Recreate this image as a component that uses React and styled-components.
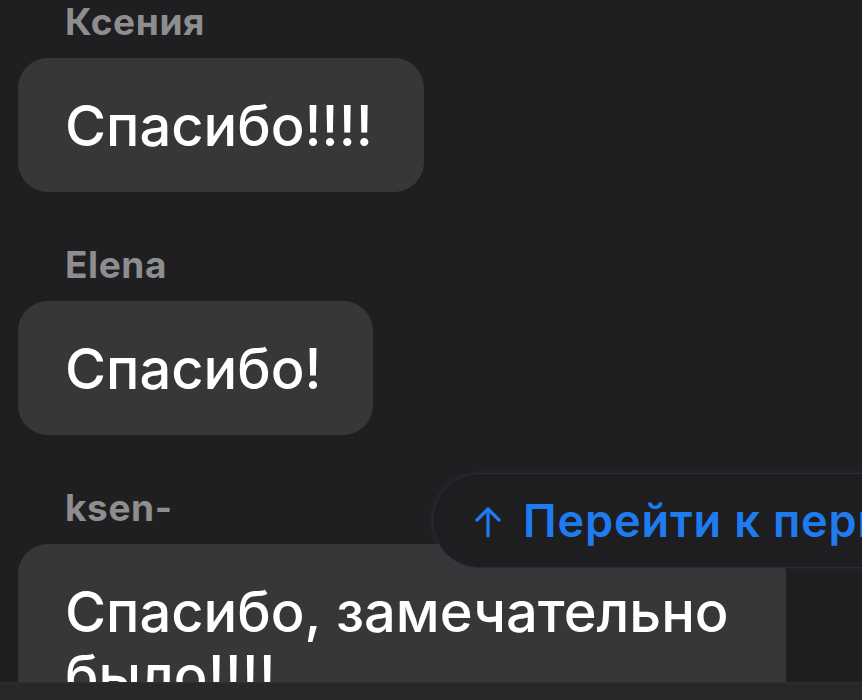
import React from "react";
import styled, { createGlobalStyle } from "styled-components";

const Global = createGlobalStyle`
  html, body { margin: 0; padding: 0; background: #1f1f21; }
  body { font-family: Inter, "Noto Sans", sans-serif; -webkit-font-smoothing: antialiased; overflow: hidden; }
`;

const Screen = styled.div`
  position: relative;
  width: 862px;
  height: 700px;
  display: flex;
  flex-direction: column;
  background: #1f1f21;
  overflow: hidden;
`;

const Feed = styled.div`
  flex: 1;
  overflow: hidden;
  display: flex;
  flex-direction: column;
  gap: 51px;
  padding: 0 0 0 18px;
`;

const Group = styled.div`
  display: flex;
  flex-direction: column;
  align-items: flex-start;
  gap: 14px;
  flex-shrink: 0;
`;

const Name = styled.div`
  margin-left: 47px;
  font-size: 37px;
  line-height: 44px;
  font-weight: 700;
  color: #8e8e90;
  letter-spacing: 0.6px;
`;

const Bubble = styled.div`
  background: #373739;
  border-radius: 30px;
  padding: 36px 51px 34px 47px;
  max-width: ${(p) => (p.$wide ? "670px" : "none")};
  font-size: 56px;
  line-height: 64px;
  font-weight: 500;
  color: #ffffff;
  letter-spacing: 0px;
  flex-shrink: 0;
`;

const JumpButton = styled.div`
  position: absolute;
  left: 432px;
  top: 473px;
  height: 95px;
  width: 560px;
  box-sizing: border-box;
  border-radius: 48px;
  background: #1e1e20;
  border: 1.5px solid #2d2c34;
  box-shadow: 0 0 6px rgba(60, 58, 80, 0.35);
  display: flex;
  align-items: center;
  padding-left: 40px;
  gap: 20px;
  font-size: 45px;
  font-weight: 600;
  color: #1f7cf0;
  white-space: nowrap;
  letter-spacing: 0.9px;
`;

const Arrow = styled.svg`
  width: 30px;
  height: 34px;
  flex-shrink: 0;
  margin-top: 2px;
`;

const BottomBar = styled.div`
  height: 17px;
  flex-shrink: 0;
  background: #28282a;
  border-top: 1px solid #303032;
`;

const messages = [
  { name: "Ксения", text: "Спасибо!!!!" },
  { name: "Elena", text: "Спасибо!" },
  { name: "ksen-", text: "Спасибо, замечательно было!!!!", wide: true },
];

export default function App() {
  return (
    <>
      <Global />
      <Screen>
        <Feed>
          {messages.map((m, i) => (
            <Group key={i}>
              <Name>{m.name}</Name>
              <Bubble $wide={m.wide}>{m.text}</Bubble>
            </Group>
          ))}
        </Feed>
        <BottomBar />
        <JumpButton>
          <Arrow viewBox="0 0 30 34" fill="none" stroke="#1f7cf0" strokeWidth="3.2" strokeLinecap="round" strokeLinejoin="round">
            <path d="M15 31V4" />
            <path d="M4 15L15 4L26 15" />
          </Arrow>
          <span>Перейти к первому</span>
        </JumpButton>
      </Screen>
    </>
  );
}
